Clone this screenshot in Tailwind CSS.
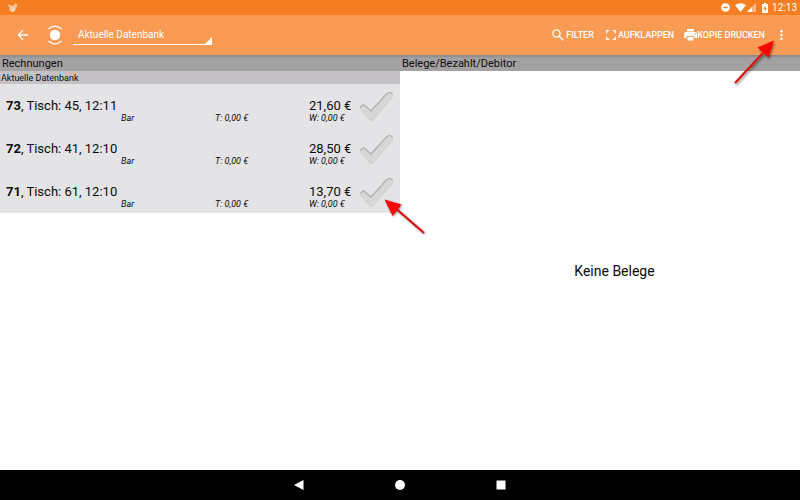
<!DOCTYPE html>
<html lang="de">
<head>
<meta charset="utf-8">
<meta name="viewport" content="width=device-width, initial-scale=1">
<title>Rechnungen</title>
<script src="https://cdn.jsdelivr.net/npm/@tailwindcss/browser@4"></script>
</head>
<body class="relative flex min-h-screen flex-col overflow-x-hidden bg-white font-['Roboto',sans-serif] text-[#0c0c0c]">

<div class="flex h-[15px] items-center justify-between bg-[#f67e22] pr-[3px] pl-2 text-white">
  <svg class="h-2.5 w-2.5" viewBox="0 0 10 10" aria-hidden="true"><path d="M1 3l2-1 2 1 2-2.500 2 .5.500 2.500-2 1.500v2L6 9H3L1.500 7z" fill="#fff" opacity=".5"/><path d="M0 2l2 1M3 7l2 .5L7 5M3.500 5h1" stroke="#fff" stroke-width=".8" fill="none"/></svg>
  <div class="flex items-center">
    <svg class="h-[9px] w-[9px]" viewBox="0 0 9 9" aria-label="Bitte nicht stören"><circle cx="4.500" cy="4.500" r="4.300" fill="#fff"/><path d="M2.200 4.500h4.600" stroke="#f67e22" stroke-width="1.300"/></svg>
    <svg class="ml-[5px] h-[9px] w-[11px]" viewBox="0 0 11 9" aria-label="WLAN"><path d="M0 2.300Q5.500-1.600 11 2.300L5.500 9z" fill="#fff"/></svg>
    <svg class="ml-px h-[9px] w-[9px]" viewBox="0 0 9 9" aria-label="Mobilfunk"><path d="M9 0v9H0z" fill="#fff" opacity=".45"/><path d="M5 4v5H0z" fill="#fff"/></svg>
    <svg class="ml-[6px] h-[10px] w-[6px]" viewBox="0 0 6 10" aria-label="Akku"><path d="M2 0h2v1h2v9H0V1h2z" fill="#fff"/><path d="M3.500 2.500L1.500 6h1.300v2.500L4.600 5H3.500z" fill="#f67e22"/></svg>
    <span class="ml-1 text-[10px] leading-[15px]">12:13</span>
  </div>
</div>

<header class="flex h-10 items-center bg-[#f99a55] text-white">
  <button class="ml-[17px] h-3 w-3" aria-label="Zurück">
    <svg class="h-3 w-3" viewBox="0 0 12 12" fill="none" stroke="#fff" stroke-width="1.300"><path d="M11 6H1.500M6 1.300L1.300 6 6 10.700"/></svg>
  </button>
  <svg class="ml-[18px] h-5 w-4" viewBox="0 0 16 20" fill="none" stroke="#fff" stroke-width="1.300" aria-hidden="true"><circle cx="8" cy="10" r="5.200" fill="#fff" stroke="none"/><path d="M1.500 4Q8-1.800 14.500 4M1.500 16Q8 21.800 14.500 16"/></svg>
  <div class="relative ml-[10px] w-[139px]">
    <label for="db" class="sr-only">Datenbank</label>
    <select id="db" class="block h-5 w-full appearance-none border-b border-white bg-transparent pl-[5px] text-[10px] leading-normal text-white outline-none"><option>Aktuelle Datenbank</option></select>
    <svg class="pointer-events-none absolute right-0 bottom-0 h-2 w-2" viewBox="0 0 8 8" aria-hidden="true"><path d="M8 0v8H0z" fill="#fff"/></svg>
  </div>
  <div class="ml-auto flex items-center text-[9px] leading-3 font-medium">
    <button class="flex items-center gap-[2px]">
      <svg class="h-3 w-3" viewBox="0 0 12 12" fill="none" stroke="#fff" stroke-width="1.400"><circle cx="4.500" cy="4.500" r="3.600"/><path d="M7.200 7.200l4 4"/></svg>
      FILTER
    </button>
    <button class="ml-3 flex items-center gap-[2px]">
      <svg class="h-[10px] w-[10px]" viewBox="0 0 10 10" fill="none" stroke="#fff" stroke-width="1.300"><path d="M.7 3.300V.7h2.600M6.700.7h2.600v2.600M9.300 6.700v2.600H6.700M3.300 9.300H.7V6.700"/></svg>
      AUFKLAPPEN
    </button>
    <button class="ml-[10px] flex items-center">
      <svg class="h-3 w-[13px]" viewBox="0 0 13 12"><path d="M3 0h7v2.500H3zM2 3h9a2 2 0 0 1 2 2v4h-2.500V7h-8v2H0V5a2 2 0 0 1 2-2zM3.500 8h6v3.500h-6z" fill="#fff"/><circle cx="11" cy="5" r=".7" fill="#f99a55"/></svg>
      KOPIE DRUCKEN
    </button>
    <button class="mr-[17px] ml-[15px]" aria-label="Weitere Optionen">
      <svg class="h-[10px] w-[3px]" viewBox="0 0 3 10" fill="#fff"><circle cx="1.500" cy="1.300" r="1.200"/><circle cx="1.500" cy="5" r="1.200"/><circle cx="1.500" cy="8.700" r="1.200"/></svg>
    </button>
  </div>
</header>

<main class="grid flex-1 grid-cols-2">
  <section class="flex flex-col">
    <h2 class="h-4 bg-linear-to-b from-[#858585] to-[#a3a1a2] to-20% pl-[2px] text-[11px] leading-[17px]">Rechnungen</h2>
    <h3 class="h-[13px] bg-[#c3c1c4] pl-px text-[9px] leading-[14px]">Aktuelle Datenbank</h3>
    <ul class="bg-[#e4e3e5]">
      <li class="grid grid-cols-[115fr_94fr_94fr_50fr_41fr] pt-[15px] pb-1 pl-[6px]">
        <p class="col-span-3 text-[13px] leading-[14px]"><b>73</b>, Tisch: 45, 12:11</p>
        <p class="text-[13px] leading-[14px] whitespace-nowrap">21,60 €</p>
        <button class="row-span-2 -mt-[9px] h-[33px] w-[35px]" aria-label="Rechnung 73 auswählen"><svg class="h-8 w-[35px]" viewBox="0 0 35 32"><path d="M1 17.500Q1 14 5 14L12 20 28 2.500Q31 .5 33.500 2.500 34.500 5 32 8L13 30 11 29z" fill="#d6d7d8" stroke="#cfcfd0"/><path d="M1.500 16.500Q2.500 14 5 14L12 20 28 2.500Q31 .5 33.500 3" fill="none" stroke="#b2b2b4" stroke-width="1.300"/></svg></button>
        <p class="col-start-2 row-start-2 text-[9px] leading-[10px] italic">Bar</p>
        <p class="col-start-3 row-start-2 text-[9px] leading-[10px] italic">T: 0,00 €</p>
        <p class="col-start-4 row-start-2 text-[9px] leading-[10px] italic">W: 0,00 €</p>
      </li>
      <li class="grid grid-cols-[115fr_94fr_94fr_50fr_41fr] pt-[15px] pb-1 pl-[6px]">
        <p class="col-span-3 text-[13px] leading-[14px]"><b>72</b>, Tisch: 41, 12:10</p>
        <p class="text-[13px] leading-[14px] whitespace-nowrap">28,50 €</p>
        <button class="row-span-2 -mt-[9px] h-[33px] w-[35px]" aria-label="Rechnung 72 auswählen"><svg class="h-8 w-[35px]" viewBox="0 0 35 32"><path d="M1 17.500Q1 14 5 14L12 20 28 2.500Q31 .5 33.500 2.500 34.500 5 32 8L13 30 11 29z" fill="#d6d7d8" stroke="#cfcfd0"/><path d="M1.500 16.500Q2.500 14 5 14L12 20 28 2.500Q31 .5 33.500 3" fill="none" stroke="#b2b2b4" stroke-width="1.300"/></svg></button>
        <p class="col-start-2 row-start-2 text-[9px] leading-[10px] italic">Bar</p>
        <p class="col-start-3 row-start-2 text-[9px] leading-[10px] italic">T: 0,00 €</p>
        <p class="col-start-4 row-start-2 text-[9px] leading-[10px] italic">W: 0,00 €</p>
      </li>
      <li class="grid grid-cols-[115fr_94fr_94fr_50fr_41fr] pt-[15px] pb-1 pl-[6px]">
        <p class="col-span-3 text-[13px] leading-[14px]"><b>71</b>, Tisch: 61, 12:10</p>
        <p class="text-[13px] leading-[14px] whitespace-nowrap">13,70 €</p>
        <button class="row-span-2 -mt-[9px] h-[33px] w-[35px]" aria-label="Rechnung 71 auswählen"><svg class="h-8 w-[35px]" viewBox="0 0 35 32"><path d="M1 17.500Q1 14 5 14L12 20 28 2.500Q31 .5 33.500 2.500 34.500 5 32 8L13 30 11 29z" fill="#d6d7d8" stroke="#cfcfd0"/><path d="M1.500 16.500Q2.500 14 5 14L12 20 28 2.500Q31 .5 33.500 3" fill="none" stroke="#b2b2b4" stroke-width="1.300"/></svg></button>
        <p class="col-start-2 row-start-2 text-[9px] leading-[10px] italic">Bar</p>
        <p class="col-start-3 row-start-2 text-[9px] leading-[10px] italic">T: 0,00 €</p>
        <p class="col-start-4 row-start-2 text-[9px] leading-[10px] italic">W: 0,00 €</p>
      </li>
    </ul>
  </section>
  <section class="flex flex-col">
    <h2 class="h-4 bg-linear-to-b from-[#858585] to-[#a3a1a2] to-20% pl-[2px] text-[11px] leading-[17px]">Belege/Bezahlt/Debitor</h2>
    <p class="flex flex-1 items-center justify-center pt-[2px] pl-[29px] text-[14px]">Keine Belege</p>
  </section>
</main>

<nav class="grid h-[30px] grid-cols-[1fr_10px_91px_10px_91px_10px_1fr] items-center bg-black">
  <button class="col-start-2 h-[10px]" aria-label="Zurück"><svg class="h-[10px] w-[10px]" viewBox="0 0 10 10"><path d="M9.500 0v10L0 5z" fill="#fff"/></svg></button>
  <button class="col-start-4 h-[10px]" aria-label="Startseite"><svg class="h-[10px] w-[10px]" viewBox="0 0 10 10"><circle cx="5" cy="5" r="5" fill="#fff"/></svg></button>
  <button class="col-start-6 h-[10px]" aria-label="Übersicht"><svg class="h-[10px] w-[10px]" viewBox="0 0 10 10"><path d="M.5.5h9v9h-9z" fill="#fff"/></svg></button>
</nav>

<svg class="pointer-events-none absolute top-[38px] right-[20px] h-[50px] w-[50px] drop-shadow-[1px_2px_1px_rgba(0,0,0,0.4)]" viewBox="0 0 50 50" aria-hidden="true"><path d="M5 45L33 15" stroke="#d90f0f" stroke-width="2.200"/><path d="M44 2.500L38.500 19.500 27.500 9.500z" fill="#f00"/></svg>
<svg class="pointer-events-none absolute top-[196px] left-[380px] h-[42px] w-[50px] drop-shadow-[1px_1px_1px_rgba(0,0,0,0.4)]" viewBox="0 0 50 42" aria-hidden="true"><path d="M44 37L17 13.500" stroke="#d90f0f" stroke-width="2.200"/><path d="M4.500 3.500L21.500 8.500 12.500 20z" fill="#f00"/></svg>
</body>
</html>
